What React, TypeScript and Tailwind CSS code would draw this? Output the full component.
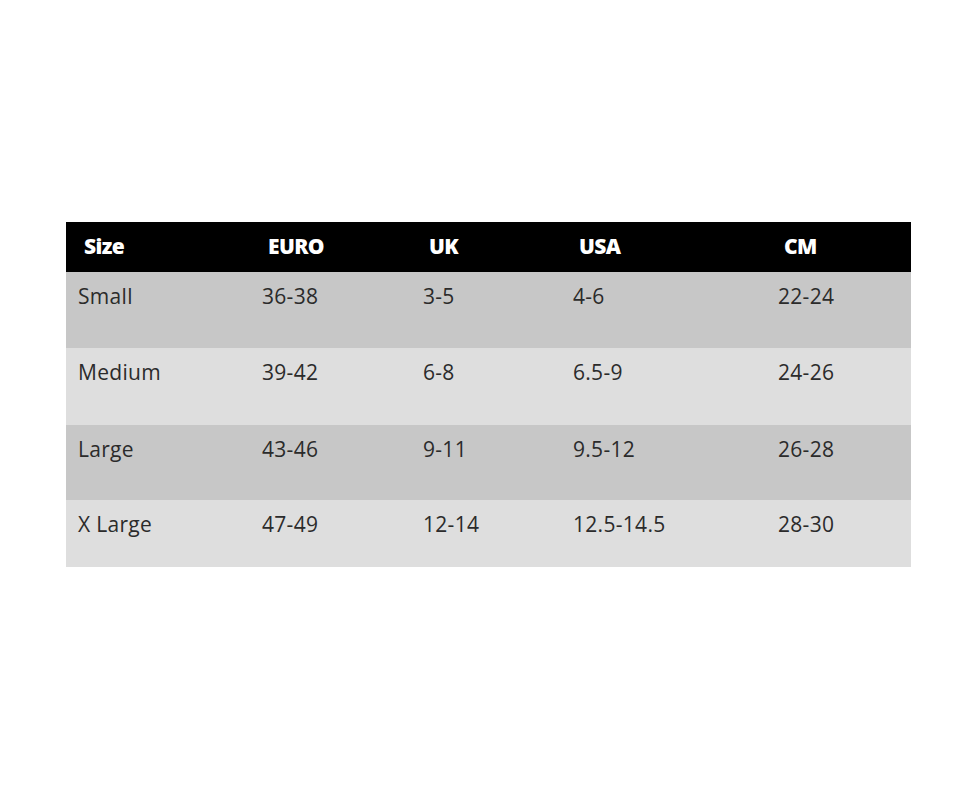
import React from 'react';

interface SizeRow {
  size: string;
  euro: string;
  uk: string;
  usa: string;
  cm: string;
  height: string;
  bg: string;
}

const headers = ['Size', 'EURO', 'UK', 'USA', 'CM'];

const rows: SizeRow[] = [
  { size: 'Small', euro: '36-38', uk: '3-5', usa: '4-6', cm: '22-24', height: 'h-[76px]', bg: 'bg-[#c7c7c7]' },
  { size: 'Medium', euro: '39-42', uk: '6-8', usa: '6.5-9', cm: '24-26', height: 'h-[77px]', bg: 'bg-[#dedede]' },
  { size: 'Large', euro: '43-46', uk: '9-11', usa: '9.5-12', cm: '26-28', height: 'h-[75px]', bg: 'bg-[#c7c7c7]' },
  { size: 'X Large', euro: '47-49', uk: '12-14', usa: '12.5-14.5', cm: '28-30', height: 'h-[67px]', bg: 'bg-[#dedede]' },
];

// column widths measured from the left edge of the text
const cols = ['w-[184px]', 'w-[161px]', 'w-[150px]', 'w-[205px]', 'flex-1'];

const App: React.FC = () => {
  return (
    <div className="w-[976px] h-[790px] bg-white pt-[222px] pl-[66px]" style={{ fontFamily: '"Open Sans", "Liberation Sans", sans-serif' }}>
      <div className="w-[845px]">
        {/* header */}
        <div className="flex items-center h-[50px] bg-black pl-[18px] text-white font-extrabold text-[21px] tracking-[-0.6px]">
          {headers.map((h, i) => (
            <div key={h} className={cols[i]}>{h}</div>
          ))}
        </div>

        {rows.map((r) => (
          <div key={r.size} className={`flex pl-[12px] pt-[10px] text-[#2b2b2b] font-medium text-[21px] leading-[28px] tracking-[0.3px] ${r.height} ${r.bg}`}>
            <div className={cols[0]}>{r.size}</div>
            <div className={cols[1]}>{r.euro}</div>
            <div className={cols[2]}>{r.uk}</div>
            <div className={cols[3]}>{r.usa}</div>
            <div className={cols[4]}>{r.cm}</div>
          </div>
        ))}
      </div>
    </div>
  );
};

export default App;
